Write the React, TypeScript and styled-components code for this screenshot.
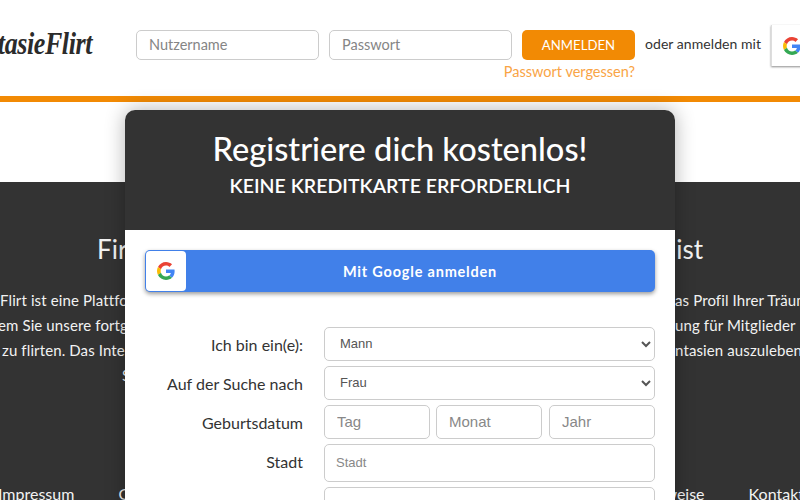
import React, { FC } from 'react';
import styled, { createGlobalStyle } from 'styled-components';

const GlobalStyle = createGlobalStyle`
  html, body { margin: 0; padding: 0; background: #fff; }
  body { font-family: Lato, "Open Sans", "Liberation Sans", sans-serif; color: #333; }
  * { box-sizing: border-box; }
`;

const Page = styled.div`
  position: relative;
  width: 800px;
  height: 500px;
  overflow: hidden;
`;

// --- header ---
const Header = styled.header`
  height: 102px;
  display: flex;
  align-items: flex-start;
  border-bottom: 6px solid #f28a04;
  background: #fff;
`;

const Logo = styled.div`
  flex: none;
  width: 92px;
  margin: 26px 44px 0 0;
  display: flex;
  justify-content: flex-end;
  white-space: nowrap;
  font-family: "Liberation Serif", serif;
  font-style: italic;
  font-weight: 700;
  font-size: 31px;
  line-height: 36px;
  letter-spacing: -0.5px;
  color: #2b2b2b;
  transform: scaleX(0.84);
  transform-origin: right center;
`;

const LoginInput = styled.input`
  flex: none;
  width: 183px;
  height: 30px;
  margin: 30px 10px 0 0;
  padding: 0 12px 2px;
  border: 1px solid #ccc;
  border-radius: 5px;
  background: #fff;
  font-family: inherit;
  font-size: 14.5px;
  &::placeholder { color: #858585; opacity: 1; }
`;

const LoginColumn = styled.div`
  flex: none;
  width: 113px;
  margin: 30px 10px 0 0;
  display: flex;
  flex-direction: column;
  align-items: flex-end;
`;

const LoginButton = styled.button`
  width: 113px;
  height: 30px;
  padding: 0 0 1px;
  border: 0;
  border-radius: 5px;
  background: #f28a04;
  color: #fff;
  font-family: inherit;
  font-size: 13.2px;
`;

const ForgotLink = styled.a`
  margin-top: 3px;
  white-space: nowrap;
  font-size: 14.5px;
  line-height: 18px;
  color: #f9a445;
`;

const AltLogin = styled.span`
  flex: none;
  width: 116px;
  margin: 35px 10px 0 0;
  white-space: nowrap;
  font-size: 14px;
  line-height: 18px;
  letter-spacing: 0.06px;
  color: #333;
`;

const HeaderGoogle = styled.div`
  flex: none;
  width: 60px;
  height: 41px;
  margin-top: 25px;
  padding-left: 11px;
  display: flex;
  align-items: center;
  background: #fff;
  border-left: 1px solid #ddd;
  box-shadow: 0 1px 2px rgba(0, 0, 0, 0.45);
`;

// --- dark intro behind the card ---
const Intro = styled.section`
  height: 318px;
  margin-top: 80px;
  display: flex;
  flex-direction: column;
  background: #333;
  color: #f2f2f2;
`;

const IntroTitle = styled.h2`
  margin: 49px 0 0;
  height: 36px;
  display: flex;
  justify-content: space-between;
  padding: 0 97px;
  font-weight: 400;
  font-size: 26px;
  line-height: 36px;
`;

const IntroText = styled.div`
  margin-top: 21px;
  display: flex;
  flex-direction: column;
  font-size: 15px;
  line-height: 25px;
  letter-spacing: 0.12px;
`;

const IntroLine = styled.div`
  display: grid;
  grid-template-columns: 125px 550px 125px;
  white-space: nowrap;
`;

const LineStart = styled.span<{ $x: number }>`
  grid-column: 1;
  margin-left: ${p => p.$x}px;
`;

const LineEnd = styled.span<{ $x: number }>`
  grid-column: 3;
  margin-left: ${p => p.$x}px;
`;

const Footer = styled.footer`
  margin-top: auto;
  height: 18px;
  display: flex;
  justify-content: space-between;
  white-space: nowrap;
  font-size: 16px;
  line-height: 24px;
`;

const FooterGroup = styled.div<{ $side: 'left' | 'right' }>`
  display: flex;
  gap: 44px;
  ${p => (p.$side === 'right' ? 'margin-right: -4px;' : 'margin-left: -2px;')}
`;

// --- registration card, lies over header and intro ---
const Card = styled.div`
  position: absolute;
  left: 125px;
  top: 110px;
  width: 550px;
  border-radius: 10px;
  overflow: hidden;
  background: #fff;
  box-shadow: 0 0 20px rgba(0, 0, 0, 0.3);
`;

const CardHead = styled.div`
  height: 120px;
  padding-top: 19px;
  background: #333;
  color: #fff;
  text-align: center;
`;

const CardTitle = styled.h1`
  margin: 0;
  font-weight: 500;
  font-size: 32.6px;
  line-height: 40px;
`;

const CardSubtitle = styled.h3`
  margin: 3px 0 0;
  font-weight: 600;
  font-size: 19.5px;
  line-height: 28px;
`;

const CardBody = styled.div`
  padding: 20px;
  height: 300px;
`;

const GoogleButton = styled.button`
  width: 510px;
  height: 42px;
  padding: 1px;
  display: flex;
  border: 0;
  border-radius: 5px;
  background: #4180e9;
  box-shadow: 0 2px 4px rgba(0, 0, 0, 0.4);
  color: #fff;
  font-family: inherit;
`;

const GoogleBox = styled.span`
  width: 40px;
  height: 40px;
  display: flex;
  align-items: center;
  justify-content: center;
  background: #fff;
  border-radius: 4px;
`;

const GoogleLabel = styled.span`
  flex: 1;
  align-self: center;
  font-weight: 700;
  font-size: 14.5px;
  letter-spacing: 0.8px;
`;

const Form = styled.form`
  margin-top: 35px;
  display: flex;
  flex-direction: column;
  gap: 5px;
`;

const Row = styled.div`
  display: grid;
  grid-template-columns: 158px 331px;
  column-gap: 21px;
  align-items: start;
`;

const Label = styled.label`
  padding-top: 7px;
  text-align: right;
  font-size: 16px;
  line-height: 22px;
  color: #333;
`;

const Select = styled.select`
  width: 100%;
  height: 34px;
  padding: 0 0 2px 11px;
  border: 1px solid #ccc;
  border-radius: 5px;
  background: #fff;
  color: #555;
  font-family: "Liberation Sans", sans-serif;
  font-size: 13px;
`;

const DateGroup = styled.div`
  display: flex;
  gap: 6px;
  & > :last-child { margin-left: auto; }
`;

const DateInput = styled.input`
  width: 106px;
  height: 34px;
  padding: 0 12px 2px;
  border: 1px solid #ccc;
  border-radius: 5px;
  font-family: "Liberation Sans", sans-serif;
  font-size: 15px;
  &::placeholder { color: #888; opacity: 1; }
`;

const TextInput = styled.input`
  width: 100%;
  height: 38px;
  padding: 0 11px 2px;
  border: 1px solid #ccc;
  border-radius: 5px;
  font-family: "Liberation Sans", sans-serif;
  font-size: 13px;
  &::placeholder { color: #888; opacity: 1; }
`;

const GoogleG: FC = () => (
  <svg width="18" height="18" viewBox="0 0 48 48" aria-hidden="true">
    <path fill="#EA4335" d="M24 9.5c3.54 0 6.71 1.22 9.21 3.6l6.85-6.85C35.9 2.38 30.47 0 24 0 14.62 0 6.51 5.38 2.56 13.22l7.98 6.19C12.43 13.72 17.74 9.5 24 9.5z" />
    <path fill="#4285F4" d="M46.98 24.55c0-1.57-.15-3.09-.38-4.55H24v9.02h12.94c-.58 2.96-2.26 5.48-4.78 7.18l7.73 6c4.51-4.18 7.09-10.36 7.09-17.65z" />
    <path fill="#FBBC05" d="M10.53 28.59c-.48-1.45-.76-2.99-.76-4.59s.27-3.14.76-4.59l-7.98-6.19C.92 16.46 0 20.12 0 24c0 3.88.92 7.54 2.56 10.78l7.97-6.19z" />
    <path fill="#34A853" d="M24 48c6.48 0 11.93-2.13 15.89-5.81l-7.73-6c-2.15 1.45-4.92 2.3-8.16 2.3-6.26 0-11.57-4.22-13.47-9.91l-7.98 6.19C6.51 42.62 14.62 48 24 48z" />
  </svg>
);

export default function App() {
  return (
    <Page>
      <GlobalStyle />
      <Header>
        <Logo>FantasieFlirt</Logo>
        <LoginInput placeholder="Nutzername" />
        <LoginInput placeholder="Passwort" />
        <LoginColumn>
          <LoginButton type="button">ANMELDEN</LoginButton>
          <ForgotLink>Passwort vergessen?</ForgotLink>
        </LoginColumn>
        <AltLogin>oder anmelden mit</AltLogin>
        <HeaderGoogle><GoogleG /></HeaderGoogle>
      </Header>

      <Intro>
        <IntroTitle>
          <span>Fir</span>
          <span>ist</span>
        </IntroTitle>
        <IntroText>
          <IntroLine><LineStart $x={0}>Flirt ist eine Plattform</LineStart><LineEnd $x={0}>as Profil Ihrer Träume</LineEnd></IntroLine>
          <IntroLine><LineStart $x={-2}>em Sie unsere fortgeschrittene</LineStart><LineEnd $x={0}>ung für Mitglieder</LineEnd></IntroLine>
          <IntroLine><LineStart $x={2}>zu flirten. Das Internet</LineStart><LineEnd $x={0}>ntasien auszuleben</LineEnd></IntroLine>
          <IntroLine><LineStart $x={122}>S</LineStart></IntroLine>
        </IntroText>
        <Footer>
          <FooterGroup $side="left">
            <span>Impressum</span>
            <span>Geschäftsbedingungen</span>
          </FooterGroup>
          <FooterGroup $side="right">
            <span>Hinweise</span>
            <span>Kontakt</span>
          </FooterGroup>
        </Footer>
      </Intro>

      <Card>
        <CardHead>
          <CardTitle>Registriere dich kostenlos!</CardTitle>
          <CardSubtitle>KEINE KREDITKARTE ERFORDERLICH</CardSubtitle>
        </CardHead>
        <CardBody>
          <GoogleButton type="button">
            <GoogleBox><GoogleG /></GoogleBox>
            <GoogleLabel>Mit Google anmelden</GoogleLabel>
          </GoogleButton>
          <Form>
            <Row>
              <Label>Ich bin ein(e):</Label>
              <Select defaultValue="Mann"><option>Mann</option><option>Frau</option></Select>
            </Row>
            <Row>
              <Label>Auf der Suche nach</Label>
              <Select defaultValue="Frau"><option>Mann</option><option>Frau</option></Select>
            </Row>
            <Row>
              <Label>Geburtsdatum</Label>
              <DateGroup>
                <DateInput placeholder="Tag" />
                <DateInput placeholder="Monat" />
                <DateInput placeholder="Jahr" />
              </DateGroup>
            </Row>
            <Row>
              <Label>Stadt</Label>
              <TextInput placeholder="Stadt" />
            </Row>
            <Row>
              <span />
              <TextInput />
            </Row>
          </Form>
        </CardBody>
      </Card>
    </Page>
  );
}
